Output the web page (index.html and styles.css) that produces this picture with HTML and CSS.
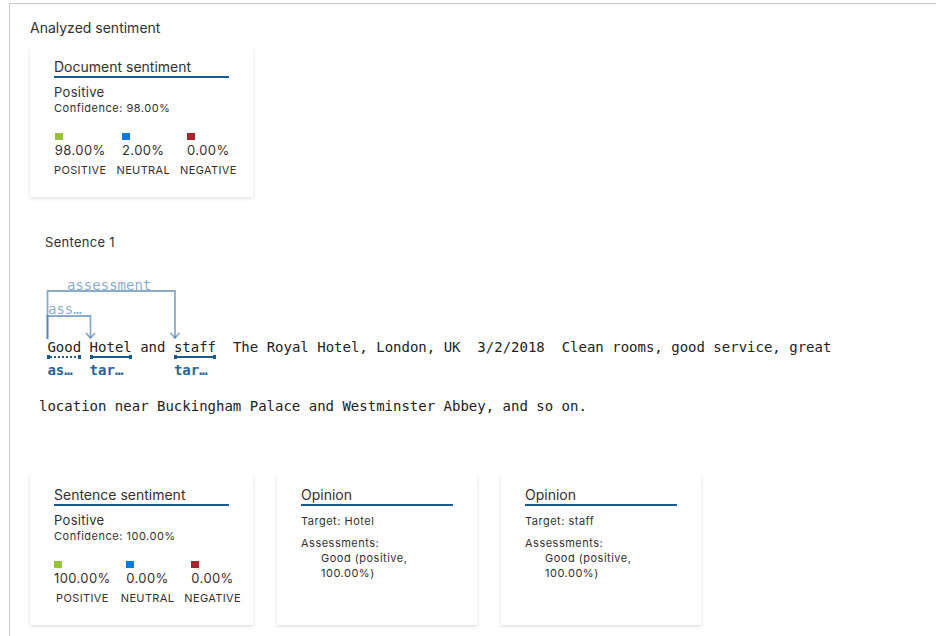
FILE: index.html
```html
<!DOCTYPE html>
<html lang="en">
<head>
<meta charset="utf-8">
<title>Analyzed sentiment</title>
<link rel="stylesheet" href="styles.css">
</head>
<body>
<div class="frame">
  <div class="section-title">Analyzed sentiment</div>

  <div class="card sentiment-card">
    <div class="card-title">Document sentiment</div>
    <div class="sent-label">Positive</div>
    <div class="confidence">Confidence: 98.00%</div>
    <div class="legend">
      <div class="legend-col">
        <div class="legend-val"><span class="swatch pos"></span><div class="pct">98.00%</div></div>
        <div class="legend-name">POSITIVE</div>
      </div>
      <div class="legend-col">
        <div class="legend-val"><span class="swatch neu"></span><div class="pct">2.00%</div></div>
        <div class="legend-name">NEUTRAL</div>
      </div>
      <div class="legend-col">
        <div class="legend-val"><span class="swatch neg"></span><div class="pct">0.00%</div></div>
        <div class="legend-name">NEGATIVE</div>
      </div>
    </div>
  </div>

  <div class="sentence">
    <div class="sentence-title">Sentence 1</div>
    <svg class="arcs" width="200" height="60" viewBox="0 0 200 60">
      <g fill="none" stroke="#1d5f9e" stroke-opacity="0.52" stroke-width="1.8">
        <path d="M8.5 60 V12 H136 V59"/>
        <path d="M131.5 54 L136 59 L140.5 54"/>
        <path d="M8.5 60 V37 H51.5 V59"/>
        <path d="M47 54 L51.5 59 L56 54"/>
      </g>
      <text class="arc-label" x="28" y="11">assessment</text>
      <text class="arc-label" x="9" y="35">ass…</text>
    </svg>
    <div class="line annotated">
      <span class="plain"> </span>
      <span class="tok">
        <span class="word">Good</span>
        <span class="uline dotted"></span>
        <span class="tag">as…</span>
      </span>
      <span class="plain"> </span>
      <span class="tok">
        <span class="word">Hotel</span>
        <span class="uline"></span>
        <span class="tag">tar…</span>
      </span>
      <span class="plain"> and </span>
      <span class="tok">
        <span class="word">staff</span>
        <span class="uline"></span>
        <span class="tag">tar…</span>
      </span>
      <span class="plain">  The Royal Hotel, London, UK  3/2/2018  Clean rooms, good service, great</span>
    </div>
    <div class="line second">location near Buckingham Palace and Westminster Abbey, and so on.</div>
  </div>

  <div class="cards-row">
    <div class="card sentiment-card">
      <div class="card-title">Sentence sentiment</div>
      <div class="sent-label">Positive</div>
      <div class="confidence">Confidence: 100.00%</div>
      <div class="legend">
        <div class="legend-col">
          <div class="legend-val"><span class="swatch pos"></span><div class="pct">100.00%</div></div>
          <div class="legend-name">POSITIVE</div>
        </div>
        <div class="legend-col">
          <div class="legend-val"><span class="swatch neu"></span><div class="pct">0.00%</div></div>
          <div class="legend-name">NEUTRAL</div>
        </div>
        <div class="legend-col">
          <div class="legend-val"><span class="swatch neg"></span><div class="pct">0.00%</div></div>
          <div class="legend-name">NEGATIVE</div>
        </div>
      </div>
    </div>

    <div class="card opinion-card">
      <div class="card-title">Opinion</div>
      <div class="op-target">Target: Hotel</div>
      <div class="op-head">Assessments:</div>
      <div class="op-item">Good (positive, 100.00%)</div>
    </div>

    <div class="card opinion-card">
      <div class="card-title">Opinion</div>
      <div class="op-target">Target: staff</div>
      <div class="op-head">Assessments:</div>
      <div class="op-item">Good (positive, 100.00%)</div>
    </div>
  </div>
</div>
</body>
</html>
```

FILE: styles.css
```css
html, body {
  margin: 0;
  padding: 0;
  background: #ffffff;
  overflow: hidden;
}

body {
  font-family: "Inter", "Liberation Sans", sans-serif;
  color: #323130;
}

.frame {
  margin: 3px 0 0 9px;
  border-top: 1px solid #c8c8c8;
  border-left: 1px solid #c8c8c8;
  padding: 15px 0 13px 20px;
}

.section-title {
  font-size: 14px;
  line-height: 18px;
  color: #323130;
}

.card {
  background: #ffffff;
  box-shadow: 0 1.6px 3.6px rgba(0, 0, 0, 0.13), 0 0.3px 0.9px rgba(0, 0, 0, 0.11);
  padding: 12px 24px 20px;
  box-sizing: border-box;
}

.sentiment-card {
  width: 223px;
  margin-top: 9px;
}

.cards-row .sentiment-card {
  margin-top: 0;
}

.opinion-card {
  width: 200px;
}

.card-title {
  font-size: 14px;
  line-height: 18px;
  border-bottom: 2px solid #1c5a8a;
}

.sent-label {
  margin-top: 6px;
  font-size: 13px;
  line-height: 17px;
  letter-spacing: 0.3px;
}

.confidence {
  font-size: 11px;
  line-height: 15px;
  letter-spacing: 0.5px;
}

.legend {
  display: flex;
  gap: 10px;
  margin-top: 17px;
}

.legend-col {
  text-align: center;
  white-space: nowrap;
}

.legend-val {
  display: inline-block;
  text-align: left;
}

.swatch {
  display: block;
  width: 8px;
  height: 7px;
}

.swatch.pos { background: #97c03c; }
.swatch.neu { background: #0f78d4; }
.swatch.neg { background: #a4262c; }

.pct {
  margin-top: 2px;
  font-size: 13px;
  line-height: 16px;
  letter-spacing: 0.4px;
}

.legend-name {
  margin-top: 4px;
  font-size: 11px;
  line-height: 14px;
  letter-spacing: 0.35px;
}

/* Sentence visualisation */
.sentence {
  margin-top: 37px;
}

.sentence-title {
  margin-left: 15px;
  font-size: 13px;
  line-height: 16px;
  letter-spacing: 0.3px;
}

.arcs {
  display: block;
  margin: 29px 0 0 9px;
  overflow: visible;
}

.arc-label {
  font-family: "DejaVu Sans Mono", "Liberation Mono", monospace;
  font-size: 14px;
  fill: #1d5f9e;
  fill-opacity: 0.55;
}

.line {
  margin-left: 9px;
  font-family: "DejaVu Sans Mono", "Liberation Mono", monospace;
  font-size: 14px;
  line-height: 17px;
  color: #222222;
}

.annotated {
  display: flex;
  align-items: flex-start;
}

.plain {
  white-space: pre;
}

.tok {
  display: flex;
  flex-direction: column;
}

.word {
  white-space: pre;
}

.uline {
  display: block;
  height: 4px;
  margin-top: -1px;
  box-sizing: border-box;
  border-left: 3px solid #1c5a8a;
  border-right: 3px solid #1c5a8a;
  background: linear-gradient(#1c5a8a, #1c5a8a) center / 100% 2px no-repeat;
}

.uline.dotted {
  background: repeating-linear-gradient(90deg, #1c5a8a 0 2px, transparent 2px 4px) center / 100% 2px no-repeat;
}

.tag {
  margin-top: 3px;
  color: #2a6395;
  font-weight: bold;
  white-space: pre;
}

.second {
  margin-top: 19px;
}

/* Bottom cards */
.cards-row {
  display: flex;
  gap: 24px;
  margin-top: 59px;
}

.op-target {
  margin-top: 8px;
  font-size: 11px;
  line-height: 15px;
  letter-spacing: 0.5px;
}

.op-head {
  margin-top: 7px;
  font-size: 11px;
  line-height: 15px;
  letter-spacing: 0.5px;
}

.op-item {
  margin: 0 20px;
  font-size: 11px;
  line-height: 15px;
  letter-spacing: 0.5px;
}
```
